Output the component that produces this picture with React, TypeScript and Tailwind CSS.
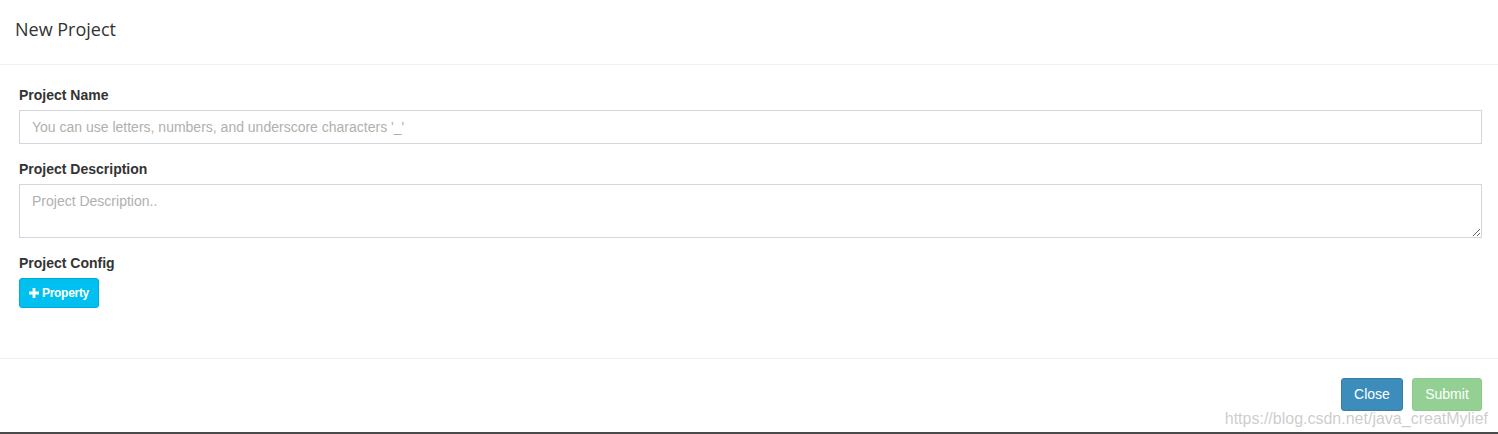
export default function App() {
  return (
    <div className="relative w-[1498px] h-[434px] bg-white overflow-hidden font-['Liberation_Sans',Arial,sans-serif] text-[#333]">
      <div className="h-[65px] border-b border-[#f0f0f0] px-[15px] flex items-center">
        <h4 className="font-['Open_Sans',sans-serif] text-[18px] text-[#333] leading-none -mt-[7px]">New Project</h4>
      </div>

      <div className="pt-[20px] pl-[19px] pr-[16px] h-[294px] border-b border-[#f0f0f0]">
        <div className="mb-[15px]">
          <label className="block text-[14px] font-bold leading-[20px] mb-[5px]">Project Name</label>
          <input
            className="block w-full h-[34px] border border-[#d2d6de] px-[12px] text-[14px] placeholder:text-[#b0b0b0] outline-none"
            placeholder="You can use letters, numbers, and underscore characters '_'"
          />
        </div>
        <div className="mb-[15px]">
          <label className="block text-[14px] font-bold leading-[20px] mb-[5px]">Project Description</label>
          <textarea
            className="block w-full h-[54px] border border-[#d2d6de] px-[12px] py-[6px] text-[14px] leading-[20px] placeholder:text-[#b0b0b0] outline-none resize-y"
            placeholder="Project Description.."
          />
        </div>
        <div>
          <label className="block text-[14px] font-bold leading-[20px] mb-[5px]">Project Config</label>
          <button className="h-[30px] w-[80px] rounded-[3px] bg-[#00c0ef] border border-[#00acd6] text-white text-[12px] font-bold tracking-[-0.3px] flex items-center justify-center gap-[3px]">
            <svg width="10" height="10" viewBox="0 0 10 10">
              <path d="M3.6 0h2.8v3.6H10v2.8H6.4V10H3.6V6.4H0V3.6h3.6z" fill="white" />
            </svg>
            Property
          </button>
        </div>
      </div>

      <div className="flex justify-end gap-[9px] pt-[19px] pr-[16px]">
        <button className="h-[33px] w-[62px] rounded-[3px] bg-[#3c8dbc] border border-[#367fa9] text-white text-[14px]">
          Close
        </button>
        <button className="h-[33px] w-[70px] rounded-[3px] bg-[#5cb85c] border border-[#4cae4c] opacity-65 text-white text-[14px]">
          Submit
        </button>
      </div>

      <div className="absolute right-[10px] bottom-[6px] text-[16px] leading-[18px] text-[#9a9a9a]/50 pointer-events-none">
        https://blog.csdn.net/java_creatMylief
      </div>
      <div className="absolute left-0 right-0 bottom-0 h-[2px] bg-[#4a4a4a]" />
    </div>
  );
}
